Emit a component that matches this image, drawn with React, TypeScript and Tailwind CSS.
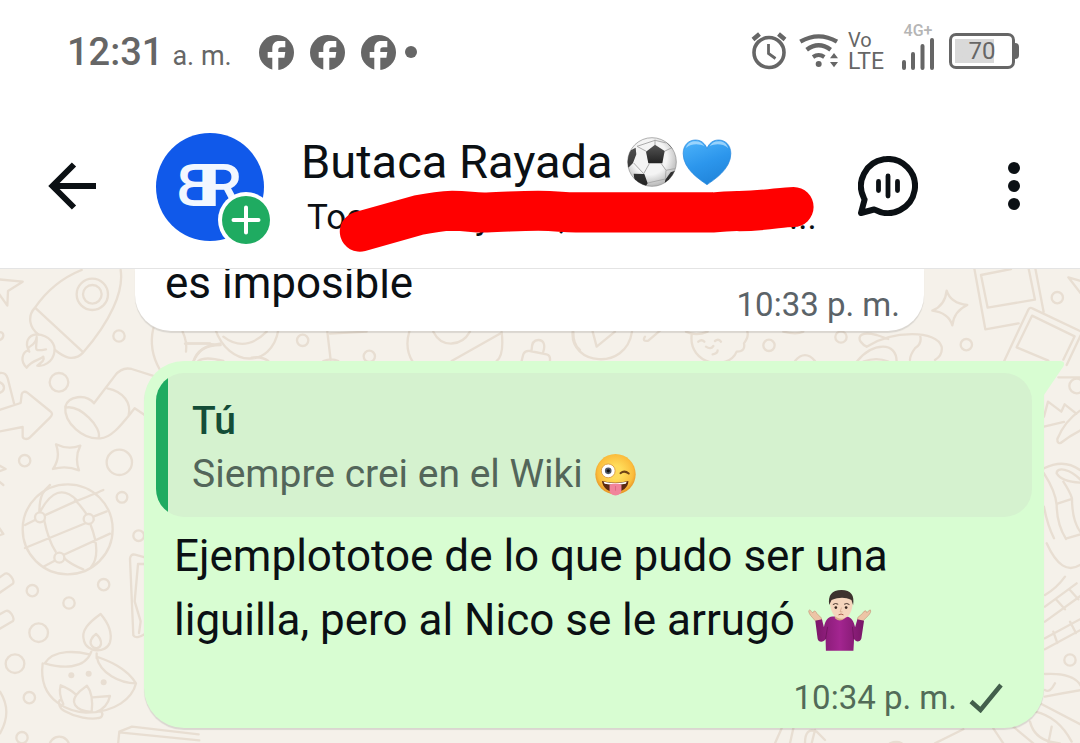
import React from "react";

function FacebookIcon() {
  return (
    <svg viewBox="0 0 35 35" className="h-[35px] w-[35px]" aria-label="Facebook" role="img">
      <circle cx="17.5" cy="17.5" r="17.5" fill="#666" />
      <path
        d="M13.3 36V22.7H8.7V17h4.600v-3.600C13.3 8.600 16 6 20.200 6h6.100v6.200h-4.200c-2 0-2.800.9-2.800 2.600V17h7l-.9 5.700h-6.100V36z"
        fill="#fff"
      />
    </svg>
  );
}

function StatusIcons() {
  return (
    <div className="flex items-center pb-[2px]">
      <svg viewBox="0 0 36 38" className="h-[38px] w-9" fill="none" stroke="#666" aria-label="Alarma" role="img">
        <circle cx="18" cy="20.5" r="15" strokeWidth="3.6" />
        <path d="M2 7.5 8.5 2M34 7.5 27.5 2" strokeWidth="4.4" />
        <path d="M17.5 12v9.5l7 5" strokeWidth="2.8" />
      </svg>
      <svg viewBox="174 54 120 108" className="ml-3 h-9 w-10" fill="none" stroke="#666" aria-label="Wi-Fi" role="img">
        <path d="M178 80q55-32 110 0" strokeWidth="13" />
        <path d="M197 104q36-27 72 0" strokeWidth="13" />
        <path d="M216 126q17-12 34 0" strokeWidth="12" />
        <circle cx="233" cy="147" r="9" fill="#666" stroke="none" />
        <path d="M279 114l12 16h-24zM279 157l12-16h-24z" fill="#666" stroke="none" />
      </svg>
      <div className="ml-[9px] w-10 text-[23px] leading-[22px] text-[#666]">
        <div className="text-[20px]">Vo</div>
        <div>LTE</div>
      </div>
      <div className="ml-[13px] flex flex-col items-center pb-2">
        <span className="text-base leading-[14px] font-medium text-[#b5b5b5]">4G+</span>
        <svg viewBox="0 0 34 32" className="h-8 w-[34px]" stroke="#666" strokeWidth="4" strokeLinecap="round" aria-label="Señal" role="img">
          <path d="M3 24v6M12 16v14M21.500 8v22M31 2v28" />
        </svg>
      </div>
      <div className="ml-[14px] flex items-center">
        <div className="rounded-[7px] border-3 border-[#666] p-[3px]">
          <div className="flex h-[24px] w-[54px] items-center justify-center bg-linear-to-r from-[#d9d9d9] from-72% to-white to-72% text-[24px] leading-[24px] text-[#666]">
            70
          </div>
        </div>
        <div className="h-4 w-1 rounded-r-sm bg-[#666]" />
      </div>
    </div>
  );
}

function SoccerBall() {
  return (
    <svg viewBox="0 0 150 150" className="h-[50px] w-[50px]" aria-label="Balón" role="img">
      <defs>
        <radialGradient id="ball" cx=".45" cy=".4" r=".6">
          <stop offset=".6" stopColor="#f4f4f4" />
          <stop offset="1" stopColor="#b9b9b9" />
        </radialGradient>
        <linearGradient id="patch" x1="0" y1="0" x2="0" y2="1">
          <stop offset="0" stopColor="#555" />
          <stop offset="1" stopColor="#222" />
        </linearGradient>
        <clipPath id="ballClip">
          <circle cx="75" cy="75" r="73" />
        </clipPath>
      </defs>
      <circle cx="75" cy="75" r="73" fill="url(#ball)" stroke="#8d8d8d" strokeWidth="2" />
      <g clipPath="url(#ballClip)">
        <path d="M84 24V8M58 43 30 28M112 43l25-12M103 80l14 20M67 80 50 110M20 78l30 32M117 100l-2 26-53 12M117 100l30-6M30 28 84 10l34 8" fill="none" stroke="#aaa" strokeWidth="3" />
        <path d="M84 23l29 19-7 37H64l-7-35z" fill="url(#patch)" />
        <path d="M26 32 28 52 18 78 4 92-8 50zM20 110l32 1 10 28-8 12-30-10zM115 128l16-22 18-6-14 36-24 13zM118 16l22 24-2-26z" fill="url(#patch)" />
      </g>
    </svg>
  );
}

function BlueHeart() {
  return (
    <svg viewBox="0 0 150 142" className="ml-[5px] h-[47px] w-[50px]" aria-label="Corazón azul" role="img">
      <defs>
        <linearGradient id="heart" x1="0" y1="0" x2=".4" y2="1">
          <stop offset="0" stopColor="#4eb4fb" />
          <stop offset=".6" stopColor="#2c96ec" />
          <stop offset="1" stopColor="#2287dd" />
        </linearGradient>
      </defs>
      <path d="M75 138C55 124 3 92 3 44 3 18 20 3 40 3c16 0 29 9 35 26C81 12 94 3 110 3c20 0 37 15 37 41 0 48-52 80-72 94z" fill="url(#heart)" stroke="#2585dc" strokeWidth="2" />
      <path d="M11 27C17 12 27 7 40 7c13 0 22 6 27 15-16-8-38-9-56 5zM83 22c5-9 14-15 27-15 13 0 23 5 29 20-18-14-40-13-56-5z" fill="#b7e1ff" opacity=".75" />
    </svg>
  );
}

function WinkFace() {
  return (
    <svg viewBox="40 36 128 130" className="h-[43px] w-[43px]" aria-label="Guiño con lengua" role="img">
      <defs>
        <radialGradient id="face" cx=".5" cy=".45" r=".55">
          <stop offset=".3" stopColor="#ffdc5a" />
          <stop offset=".8" stopColor="#fbbd3c" />
          <stop offset="1" stopColor="#e69326" />
        </radialGradient>
      </defs>
      <circle cx="104" cy="100" r="61" fill="url(#face)" />
      <circle cx="82" cy="90" r="21" fill="#fff" stroke="#dfa24a" strokeWidth="3" />
      <circle cx="82" cy="90" r="10" fill="#4d5566" />
      <circle cx="82" cy="90" r="5" fill="#151515" />
      <path d="M119 97q12-10 25 1" fill="none" stroke="#6f4316" strokeWidth="6" strokeLinecap="round" />
      <path d="M63 121q40 10 80 0c0 20-18 33-40 33s-38-13-40-33z" fill="#5c2a12" />
      <path d="M68 123q36 8 70 0l-3 6q-32 6-64 0z" fill="#fff" />
      <path d="M86 132q18-7 36 0v16c0 22-36 22-36 0z" fill="#f1849b" />
      <path d="M104 136v14" stroke="#d45d78" strokeWidth="2" />
    </svg>
  );
}

function ShrugMan() {
  return (
    <svg viewBox="84 26 194 190" className="-mt-[11px] -mb-[5px] ml-3 inline-block h-[63px] w-[65px] align-middle" aria-label="Hombre encogiéndose de hombros" role="img">
      <defs>
        <linearGradient id="shirt" x1="0" y1="0" x2="1" y2="0">
          <stop offset="0" stopColor="#7b1769" />
          <stop offset=".5" stopColor="#a32590" />
          <stop offset="1" stopColor="#771666" />
        </linearGradient>
      </defs>
      <path d="M108 122 94 106c-6-8-8-16-3-17 4 0 5 8 10 9 2-8 8-7 12 2l13 13 2 10zM252 122l15-15c7-7 10-14 7-18-3-2-7 8-11 8-1-8-8-6-12 2l-15 13-1 10z" fill="#edc5a6" stroke="#b98466" strokeWidth="1.500" />
      <path d="M160 109c-16 1-22 14-26 32l-6-24-20 5 7 54c2 12 18 12 24 1l1 35h83l2-35c6 11 19 8 22-2l8-53-20-5-7 24c-4-18-11-31-27-32z" fill="url(#shirt)" />
      <path d="M139 177l6-37M224 177l-4-37" stroke="#661054" strokeWidth="2" fill="none" />
      <path d="M167 98h30v16q-15 14-30 0z" fill="#d9a888" />
      <path d="M152 63c0-40 69-40 69 0 0 33-14 53-34 53s-35-20-35-53z" fill="#f5d5bc" />
      <path d="M150 74c-4-28 7-45 37-45 29 0 40 16 35 46l-5-16c-20-9-38-8-60 0z" fill="#3d322e" />
      <path d="M161 73q8-6 16-1M195 72q8-5 16 1" stroke="#46332b" strokeWidth="3" fill="none" />
      <circle cx="170" cy="82" r="4" fill="#36251e" />
      <circle cx="201" cy="82" r="4" fill="#36251e" />
      <path d="M187 82l-4 13h7" stroke="#cf9f83" strokeWidth="2" fill="none" />
      <path d="M178 104q8-5 15 0" stroke="#a95c4c" strokeWidth="3" fill="none" />
    </svg>
  );
}

function Wallpaper() {
  return (
    <svg
      viewBox="0 269 1080 474"
      preserveAspectRatio="xMidYMin slice"
      className="absolute inset-0 h-full w-full"
      fill="none"
      stroke="#e8ded2"
      strokeWidth="7"
      strokeLinecap="round"
      strokeLinejoin="round"
      aria-hidden="true"
    >
      <g transform="translate(0 265) scale(.3333)">
        <path d="M-5 43l73 7-44 28-2 44-27-38M105 128C145 70 195 35 245 15M362 15C372 80 330 170 250 262M105 128 250 262C220 293 190 275 165 255M105 128C80 155 90 190 115 208" />
        <circle cx="277" cy="88" r="47" /><circle cx="277" cy="88" r="28" />
        <path d="M80 308C60 290 65 262 86 255 75 235 82 210 110 208 150 210 168 240 163 262 158 292 130 305 112 302 125 292 135 285 130 275 120 285 95 285 80 308zM88 260c-14-20 20-12 22-44 2 34-16 46 28 37" />
        <circle cx="357" cy="213" r="17" /><circle cx="177" cy="352" r="28" /><circle cx="74" cy="587" r="17" /><circle cx="358" cy="592" r="38" /><circle cx="366" cy="697" r="16" />
        <path d="M-5 325c20-5 25 5 28 15l19 75M-5 350c25 10 20 30 0 35M-5 436l67-22 3-26c2-8 10-10 17-5l68 55c8 6 8 12 0 20l-60 59c-8 8-22 6-22-3v-28L-5 500M-5 202c20-5 20 20 0 25" />
        <path d="M282 415 345 332c15-20 30-25 50-20l70 22M282 415c-25-30-78-22-86 10-5 50 55 100 105 95 35 0 70-50 103-90l30 20M196 428c45-10 110 60 100 90M322 370c50 10 72 45 64 80" />
        <path d="M168 538q37 18 73 4-18 35-4 74-37-15-78-4 24-35 9-74zM-5 600l22 12-22 8M-5 648l15 12" />
        <path d="M460 190q-15 65 20 125M548 200q14 30 10 60M560 235h70M580 290q20-45 60-50" />
      </g>
      <g transform="translate(0 500) scale(.3333)">
        <circle cx="203" cy="88" r="135" />
        <path d="M118 38C118-20 135-32 150-45M133 62Q145 120 167 155M190 172q20 20 60 36M134 46 225 5Q300-25 310-30M75 75l30-15M75 144l205-84M280 50l40-16M130 200l34-18M190 165l140-64M225 0q20 20 34 42M271 72q35 90 2 130M120 36Q170-60 230 0" />
        <circle cx="120" cy="52" r="15" fill="#f5f1ea" /><circle cx="266" cy="57" r="15" fill="#f5f1ea" /><circle cx="178" cy="173" r="15" fill="#f5f1ea" />
        <circle cx="416" cy="107" r="16" /><circle cx="311" cy="254" r="17" /><circle cx="207" cy="309" r="17" /><circle cx="97" cy="272" r="17" /><circle cx="116" cy="398" r="28" /><circle cx="45" cy="491" r="28" /><circle cx="88" cy="593" r="17" /><circle cx="66" cy="713" r="17" /><circle cx="178" cy="740" r="30" />
        <path d="M-5 235l20-14c12-5 30 20 24 30l-44 30M-5 345l22-12c12-5 28 20 22 30l-44 26M-5 80l15 22-15 5M0 575q38 60 0 125" />
        <path d="M435 172l-30-8c-10-2-14 3-15 12l10 230c5 10 20 5 35-4M414 192h20M414 194l-10 110 18 60-5 35" />
        <path d="M302 342c-35 25-60 50-50 80 8 35 66 40 78 5 8-30-7-60-28-85z" />
        <path d="M288 402c-15 10-20 25-13 35 8 12 25 10 28-5 1-14-5-22-15-30zM274 455c-20 55-90 50-140 35 30-45 100-35 134-27M128 490c-15 120 90 145 130 148 90 0 140-45 150-88-30-50-90-70-118-80M290 470c10 50 70 80 118 80M290 460v15M182 600c-10 0-5 25 10 32 35 20 80 28 105 22 10 0 12-12 8-18M190 612q-15-30-8-56 30 12 46 28M275 636c-50-5-70-30-36-62l22-17q20 25 14 79zM278 592l52-4q-8 36-42 48" />
        <g fill="#e8ded2" stroke="none"><circle cx="214" cy="526" r="9" /><circle cx="266" cy="521" r="9" /><circle cx="311" cy="547" r="9" /></g>
        <path d="M354 735l4-40 38-15 200 23M358 697l240 24" />
      </g>
      <g transform="translate(130 265) scale(.3333)">
        <path d="M165 236h70q20 5 35 0M190 290q15-50 82-50M205 288q20-15 75 0M255 190c40 120 170 120 190 5M280 215q65 50 130-15M365 278q30-5 50 10M592 200l10 85M600 206l110-6M838 200q-15 50 10 90M965 288l150-85M910 200c25 50 85 45 110 0M1115 200q8 70-15 88M1175 288l5-20q5-12 20-10l50 10q12 2 10 20M1205 255c0-15 5-30 20-30 20 0 20 20 15 35M1330 200q0 40 20 55M580 288q25-10 45 0" />
        <circle cx="518" cy="226" r="17" /><circle cx="718" cy="274" r="17" />
      </g>
      <g transform="translate(560 265) scale(.3333)">
        <path d="M38 200c-10 100 160 120 178 0M98 200l12 45 55-45M255 215q-10 15 10 12l35-30M378 200q30 15 65 0M395 210c-10 90 110 110 135 50 20 0 25-10 22-25q15-20 10-35M415 230q10-8 18 0M465 228q10-8 18 2M438 245q14 10 22-2M458 268q15-2 15-12M705 288q30-35 60 0M890 290c50-60 120-60 120 0M920 245c-30-15-35-50 30-35l35 12M920 245c80-50 210-50 225 0q4 25-20 40M1080 210q8 25-15 40-15 20-15 35M910 290q40-15 75 0M670 200q40 10 60 0" />
        <circle cx="627" cy="241" r="17" /><circle cx="843" cy="216" r="17" />
      </g>
      <g transform="translate(900 260) scale(.3333)">
        <path d="M140 92q12 38 62 43-40 18-45 61-12-38-60-44 38-15 43-60z" />
        <circle cx="199" cy="254" r="17" /><circle cx="472" cy="113" r="17" /><circle cx="530" cy="378" r="22" />
        <path d="M222 20l34 188 100-18M243 45l20 98 142-24-20-98M243 45l90-18M405 20l26 136M313 302l72-153q5-8 12-4l158 75M350 262l46-95 128 62-34 70M350 262l95 40M545 220l-45 95M550 110 505 52l50 15M475 352h80M432 470l12-45 40 30 10-22 35 28M432 500l60-14M540 452q-45 30-68 85 0 15 10 12 25-20 60-38M432 625q60-30 108 5M470 640c0-20 40-15 72 20M470 640q15 25 72 28M432 640q35 55 38 95M470 732l46-15M490 665q20 30 26 50 0 70 28 105M470 732q0 60 28 105M432 740q10 55 30 95M500 835l42-12M440 850q45 100 100 65" />
      </g>
      <g transform="translate(780 580) scale(.3333)">
        <path d="M795 80 890 10M795 125 905 45M795 175l110-60M795 208l110-60M830 60l25 28M870 30l25 28M820 155l12 34M870 125l18 34M795 45q35-20 60-55" />
        <circle cx="870" cy="240" r="17" />
        <path d="M795 282q90-5 110 40M795 350q50-10 110-20M780 370l125 65M765 395q70 15 110 90M750 425q15 60 90 65M815 440l-10 50M795 330q15 10 30-20M640 445l30 45M700 440l60 50M465 490l85-42M5 445l-20 45M40 445l-10 45M75 490q0-50 35-35l25 25M105 450l-10 40M330 490q20-8 35 0" />
      </g>
    </svg>
  );
}

export default function App() {
  return (
    <div className="flex min-h-screen flex-col overflow-x-hidden bg-white font-[Roboto,'Liberation_Sans',sans-serif] text-[#0b1014]">
      <div className="flex h-[104px] items-center justify-between pr-[61px] pl-[67px] text-[#666]">
        <div className="flex items-center">
          <div className="flex items-baseline gap-[9px] pt-1">
            <span className="text-[38px] leading-[48px] font-medium">12:31</span>
            <span className="text-[27px] leading-[48px]">a. m.</span>
          </div>
          <div className="ml-[27px] flex items-center gap-4">
            <FacebookIcon />
            <FacebookIcon />
            <FacebookIcon />
          </div>
          <span className="ml-[9px] h-3 w-3 rounded-full bg-[#666]" />
        </div>
        <StatusIcons />
      </div>

      <header className="flex h-[165px] items-center border-b border-[#e4e4e4] pr-[54px] pl-12">
        <button type="button" aria-label="Atrás" className="shrink-0">
          <svg viewBox="0 0 48 48" className="h-12 w-12" fill="none" stroke="#0b1014" strokeWidth="6">
            <path d="M26 2.500 4.500 24 26 45.500M5 24h43" />
          </svg>
        </button>
        <div className="relative mt-[2px] ml-[60px] shrink-0">
          <svg viewBox="0 0 108 108" className="h-[108px] w-[108px]" aria-label="BR" role="img">
            <circle cx="54" cy="54" r="54" fill="#1059ea" />
            <g fill="#f2f7ff" fontFamily="Roboto, sans-serif" fontSize="60" fontWeight="500">
              <text transform="translate(58 73) scale(-1 1)">B</text>
              <text x="48" y="73">R</text>
            </g>
          </svg>
          <svg viewBox="0 0 56 56" className="absolute -right-[10px] -bottom-[7px] h-14 w-14" aria-hidden="true">
            <circle cx="28" cy="28" r="28" fill="#fff" />
            <circle cx="28" cy="28" r="24" fill="#1fab61" />
            <path d="M28 15.500v25M15.500 28h25" stroke="#fff" strokeWidth="4" strokeLinecap="round" />
          </svg>
        </div>
        <div className="relative ml-[37px] min-w-0 grow">
          <h1 className="flex items-center text-[47px] leading-[56px] whitespace-nowrap">
            <span className="mr-[14px]">Butaca Rayada</span>
            <SoccerBall />
            <BlueHeart />
          </h1>
          <p className="mt-2 flex pl-[6px] text-[35px] leading-[40px] whitespace-nowrap">
            <span className="w-[168px]">Toc</span>
            <span className="w-[84px]">y</span>
            <span className="w-[230px]">,</span>
            <span>...</span>
          </p>
          <svg viewBox="0 0 1440 210" className="absolute top-[51px] left-[33px] h-[72px] w-[496px]" fill="none" aria-hidden="true">
            <path d="M72 136 242 88Q300 76 342 75C390 75 400 81 442 80 500 79 530 75 592 75 650 75 660 80 702 80H1102C1140 78 1150 76 1172 76 1250 77 1300 64 1337 64" stroke="#f00" strokeWidth="117" strokeLinecap="round" />
          </svg>
        </div>
        <button type="button" aria-label="Chat de voz" className="shrink-0">
          <svg viewBox="0 0 60 60" className="h-[60px] w-[60px]" fill="none" stroke="#0b1014" strokeLinecap="round" strokeLinejoin="round">
            <path d="M3 57l3.600-13.500L6 42.400A27 27 0 1 1 17.200 53.800L16 53.500z" strokeWidth="6" />
            <path d="M20.500 25.500v9M39.500 25.500v9M30 20v20" strokeWidth="4.800" />
          </svg>
        </button>
        <button type="button" aria-label="Más opciones" className="ml-[84px] shrink-0">
          <svg viewBox="0 0 24 48" className="h-12 w-6" fill="#0b1014">
            <circle cx="12" cy="6" r="6" />
            <circle cx="12" cy="24" r="6" />
            <circle cx="12" cy="42" r="6" />
          </svg>
        </button>
      </header>

      <main className="relative grow overflow-hidden bg-[#f5f1ea] pb-[15px]">
        <Wallpaper />
        <div className="relative mr-[156px] ml-[135px] flex h-[62px] justify-between rounded-b-[36px] bg-white pr-6 pl-[30px] shadow-[0_2px_1px_#0000001c]">
          <p className="-mt-[18px] text-[44px] leading-[64px]">es imposible</p>
          <time className="self-end pb-[6px] text-[33px] leading-[40px] text-[#5b6368]">10:33 p. m.</time>
        </div>

        <article className="relative mt-[30px] mr-9 ml-36 rounded-[40px] rounded-tr-none bg-[#d8fdd2] px-3 pt-3 pb-[10px] shadow-[0_2px_1px_#0000001c]">
          <svg viewBox="0 0 22 36" className="absolute top-0 -right-[21px] h-9 w-[22px]" aria-hidden="true">
            <path d="M0 0h18q5 1 2 6L1 34H0z" fill="#d8fdd2" />
          </svg>
          <blockquote className="flex h-36 overflow-hidden rounded-[28px] bg-[#d5f2cf]">
            <div className="w-3 shrink-0 bg-[#1fab61]" />
            <div className="pt-6 pl-6">
              <p className="text-[39px] leading-[48px] font-medium text-[#144d37]">Tú</p>
              <p className="mt-[5px] flex items-center gap-[11px] text-[39px] leading-[48px] text-[#53665a]">
                Siempre crei en el Wiki <WinkFace />
              </p>
            </div>
          </blockquote>
          <p className="mt-[7px] max-w-[800px] px-[18px] text-[44px] leading-[64px]">
            Ejemplototoe de lo que pudo ser una liguilla, pero al Nico se le arrugó
            <ShrugMan />
          </p>
          <div className="mt-[26px] flex items-center justify-end gap-3 pr-[29px] text-[#526b58]">
            <time className="text-[33px] leading-[40px]">10:34 p. m.</time>
            <svg viewBox="0 0 34 30" className="h-[30px] w-[34px]" fill="none" stroke="#435f4c" strokeWidth="4.500" aria-label="Enviado" role="img">
              <path d="M2 18.500 11.500 27 32 2" />
            </svg>
          </div>
        </article>
      </main>
    </div>
  );
}
